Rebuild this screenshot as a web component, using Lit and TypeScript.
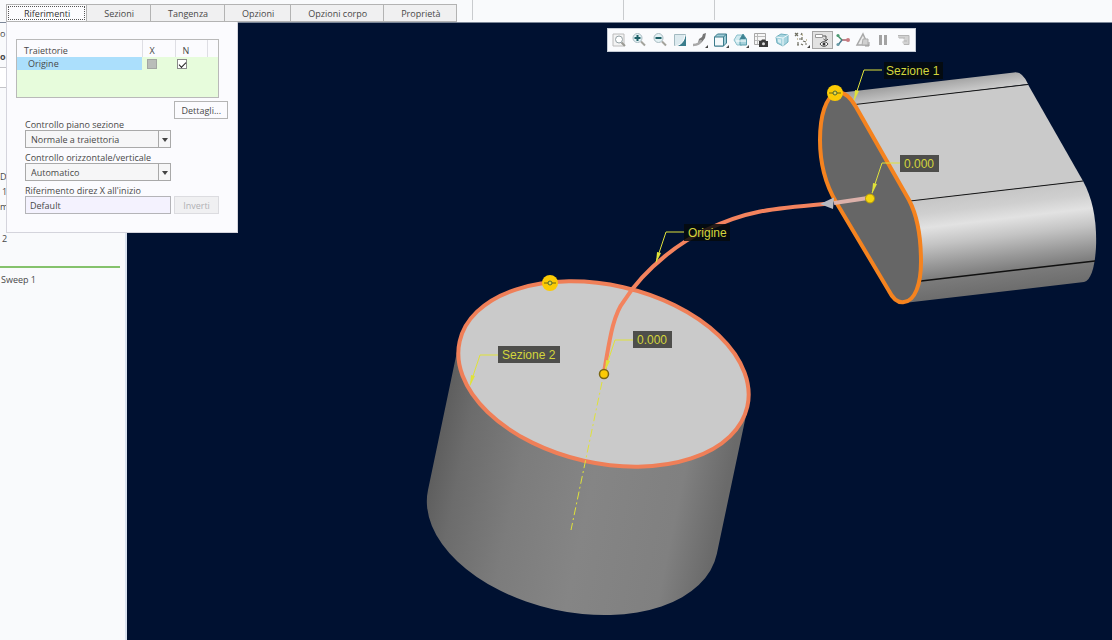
import { LitElement, html, css, svg } from "lit";
import { customElement, state } from "lit/decorators.js";
import { classMap } from "lit/directives/class-map.js";

const TABS = ["Riferimenti", "Sezioni", "Tangenza", "Opzioni", "Opzioni corpo", "Proprietà"];

const lens = svg`<circle cx="6.500" cy="6" r="4.500" fill="#e3f1f4" stroke="#a9bcc2"/><path d="M10 9.500l4 4" stroke="#a3a39c" stroke-width="2"/>`;
const more = svg`<path d="M16 13v3h-3z" fill="#444"/>`;

const TOOLS = [
  { label: "Adatta", icon: svg`<path d="M2 2h11v12H2z" fill="#f3f3f3" stroke="#bcbcbc"/><circle cx="8" cy="7.500" r="3.500" fill="#fff" stroke="#93a0a4"/><path d="M10.500 10.500l3.500 3.500" stroke="#9a9a94" stroke-width="2"/>` },
  { label: "Zoom avanti", icon: svg`${lens}<path d="M3.500 6h6M6.500 3v6" stroke="#1c5f66" stroke-width="2"/>` },
  { label: "Zoom indietro", icon: svg`${lens}<path d="M3.500 6h6" stroke="#1c5f66" stroke-width="2"/>` },
  { label: "Ridisegna", icon: svg`<path d="M2.500 2.500h11v11h-11z" fill="#dceaef" stroke="#a3bac1"/><path d="M14 3v11H5c5-2 7-5 9-11z" fill="#3b7d8c"/><path d="M3 14c6-1 9-4 10-11" fill="none" stroke="#fff"/>` },
  { label: "Rendering", icon: svg`<path d="M6 11l1-4 3-2 1-3 3-1-1 5-3 4-3 2z" fill="#767676"/><path d="M1 13c4 0 7-1 8-5" fill="none" stroke="#a9a9a9" stroke-width="2.500"/>${more}` },
  { label: "Stile di visualizzazione", icon: svg`<path d="M1.500 5l3-3h9v9l-3 3h-9z" fill="#9ccbd6" stroke="#3c7b8b"/><path d="M1.500 5h9v9h-9z" fill="#f4f9fb" stroke="#3c7b8b"/><path d="M10.500 5l3-3" stroke="#3c7b8b"/>${more}` },
  { label: "Orientamenti salvati", icon: svg`<path d="M1 8l3-5h5v10H4z" fill="#cfe9ef" stroke="#8bc0cc"/><path d="M10 2l3.500 5v6H7V7z" fill="#a5d1db" stroke="#5b9eac"/><path d="M10 2l3 5H7z" fill="#3e8292"/><path d="M3 9h10" stroke="#fff"/>${more}` },
  { label: "Gestione viste", icon: svg`<path d="M1.500 1.500h11v11h-11z" fill="#f6f6f6" stroke="#a7a7a7"/><path d="M2 4.500h10M4.500 2v10M2 8.500h10" stroke="#bbb"/><path d="M6 9h2l1-1.500h3L13 9h2v6H6z" fill="#3b3b3b"/><circle cx="10.500" cy="11.800" r="1.500" fill="#ddd"/>` },
  { label: "Prospettiva", icon: svg`<path d="M2 5l5-3 7 1v7l-5 4-6-3z" fill="#a6d4df" stroke="#6fafbe"/><path d="M2 5l7 1v8M9 6l5-3" fill="none" stroke="#eef8fa"/><path d="M4 7l3 .5v4L4 10z" fill="#d6edf2"/>` },
  { label: "Filtri riferimenti", icon: svg`<path d="M1 1l3 3M4 1L1 4M7 3l1-2M5 7h3M8 5v3M4 10v3M3 13h2M7 12l2 1M9 9l3 1M11 12h2" stroke="#6f6f62" stroke-width="1.200"/><path d="M8 3h1M12 8h1M3 7h1" stroke="#9b8d4d"/>${more}` },
  { label: "Visualizzazione annotazioni", on: true, icon: svg`<path d="M1.500 2.500h7v3h-7z" fill="#fff" stroke="#999"/><path d="M9 4h3v5M9.500 7l2.500 2 2-2" fill="none" stroke="#555"/><path d="M6 12c2-3 6-3 8 0-2 3-6 3-8 0z" fill="#fff" stroke="#444"/><circle cx="10" cy="12" r="1.500" fill="#333"/>` },
  { label: "Centro di rotazione", icon: svg`<path d="M7 8h6" stroke="#a8606a" stroke-width="1.500"/><path d="M7 8L3 4" stroke="#3f8c66" stroke-width="1.500"/><path d="M7 8l-4 5" stroke="#4a7c8d" stroke-width="1.500"/><circle cx="3" cy="3.500" r="1.600" fill="#4c9a72"/><circle cx="3" cy="12.500" r="1.600" fill="#6b9ca8"/><circle cx="13" cy="8" r="2" fill="#c87a80"/>` },
  { label: "Simulazione", icon: svg`<path d="M8 2l5 11H2z" fill="#ececec" stroke="#a8a8a8" stroke-width="1.500"/><path d="M8 7h5v6H7z" fill="#d0d0d0" stroke="#adadad"/><path d="M14 10v4h-4" fill="none" stroke="#9a9a9a"/>` },
  { label: "Pausa", icon: svg`<path d="M4 3h3v10H4zM9 3h3v10H9z" fill="#a3a3a3"/>` },
  { label: "Riprendi", icon: svg`<path d="M2 3h11v10H8l-2-3 2-2-1-2H2z" fill="#d2d2d2"/><path d="M2 3.500h11v9H8M3 6h6M8 9h3" fill="none" stroke="#b5b5b5"/>` },
];

@customElement("model-scene")
class ModelScene extends LitElement {
  static styles = css`
    :host { display: block; height: 100%; }
    .canvas { display: block; width: 100%; height: 100%; }
    .note { font: 12px "Liberation Sans", Arial, sans-serif; fill: #d3d53c; }
    .leader { fill: none; stroke: #dfe23a; stroke-width: 1; }
    .tip { fill: #dfe23a; }
    .plate { fill: #4e4e4b; }
    .dark { fill: #050a0c; fill-opacity: 0.85; }
    .edge { stroke: #161616; stroke-width: 1; }
    .section { fill: none; stroke: #ef7f58; stroke-width: 4; }
    .track { fill: none; stroke: #f3835e; stroke-width: 4; stroke-linecap: round; }
  `;

  private note(x: number, y: number, w: number, text: string, dark = false, pad = 4) {
    return svg`
      <rect class=${dark ? "dark" : "plate"} x=${x} y=${y} width=${w} height="17"/>
      <text class="note" x=${x + pad} y=${y + 13}>${text}</text>`;
  }

  private leader(x: number, y: number) {
    return svg`
      <path class="leader" d="M${x} ${y}h-18l-10 30"/>
      <path class="tip" d="M${x - 28} ${y + 31}l1 -11l4 1z"/>`;
  }

  private handle(x: number, y: number) {
    return svg`
      <circle cx=${x} cy=${y} r="8" fill="#fbcb05"/>
      <path d="M${x - 6} ${y}h12" stroke="#6b6410"/>
      <circle cx=${x} cy=${y} r="2" fill="#e8d84a" stroke="#4d6b33"/>`;
  }

  render() {
    return html`
      <svg class="canvas" viewBox="127 23 985 617" preserveAspectRatio="xMinYMin slice" role="img" aria-label="Modello 3D">
        <defs>
          <linearGradient id="drum" gradientUnits="userSpaceOnUse" x1="440" y1="420" x2="728" y2="480">
            <stop offset="0" stop-color="#5d5d5d"/><stop offset="0.1" stop-color="#6c6c6c"/>
            <stop offset="0.3" stop-color="#7c7c7c"/><stop offset="0.55" stop-color="#858585"/>
            <stop offset="0.85" stop-color="#808080"/><stop offset="1" stop-color="#6a6a6a"/>
          </linearGradient>
          <linearGradient id="round" gradientUnits="userSpaceOnUse" x1="910" y1="201" x2="922" y2="302">
            <stop offset="0" stop-color="#c6c6c6"/><stop offset="0.14" stop-color="#cfcfcf"/>
            <stop offset="0.28" stop-color="#e2e2e2"/><stop offset="0.45" stop-color="#c4c4c4"/>
            <stop offset="0.65" stop-color="#999"/><stop offset="0.8" stop-color="#7b7b7b"/>
            <stop offset="1" stop-color="#6c6c6c"/>
          </linearGradient>
          <linearGradient id="crown" gradientUnits="userSpaceOnUse" x1="930" y1="82" x2="932" y2="96">
            <stop offset="0" stop-color="#a2a2a2"/><stop offset="1" stop-color="#cacaca"/>
          </linearGradient>
        </defs>

        <path fill="url(#crown)" d="M838 93L1014 72.500Q1022 71 1028 84L855 105z"/>
        <path fill="#cacaca" d="M850 105L1028 84.500L1083 181L910 201z"/>
        <path fill="url(#round)" d="M908 201L1083 181C1093 199 1097 222 1096 247C1095 264 1092 280 1084 282L904 303z"/>
        <path class="edge" d="M855 104.500L1028 84.500M910 201L1083 181"/>
        <path stroke="#101010" stroke-width="1.500" d="M921 281L1095 261"/>
        <path fill="#666" stroke="#f5831f" stroke-width="4" stroke-linejoin="round"
          d="M836 93C826 97 820 115 820 140C820 165 826 185 836 202L889 291C893 299 898 303 904 302C915 301 921 284 921 262C921 237 918 217 909 200L856 107C849 95 843 91 836 93z"/>

        <path fill="url(#drum)" d="M459 342L428 490A147.800 89.300 12.800 0 0 716.800 554L748 406z"/>
        <ellipse class="section" style="fill:#cacaca" cx="603.500" cy="374" rx="147.500" ry="89" transform="rotate(12.800 603.500 374)"/>
        <path class="leader" stroke-dasharray="8 3 2 3" d="M602 382L571 530"/>

        <path class="track" d="M604 372C609 345 612 316 624 301C646 266 684 240 706 230C746 211 768 209 824 204"/>
        <path d="M868 198L834 203" stroke="#dcb1aa" stroke-width="4"/>
        <path d="M820 204L834 197.500L833 209z" fill="#b6b9c2"/>

        ${this.leader(882, 70)} ${this.note(884, 62, 59, "Sezione 1", true, 2)}
        ${this.leader(900, 163)} ${this.note(900, 155, 39, "0.000")}
        ${this.leader(684, 232)} ${this.note(684, 224, 46, "Origine", true)}
        ${this.leader(498, 355)} ${this.note(498, 346, 62, "Sezione 2")}
        ${this.leader(633, 340)} ${this.note(633, 331, 39, "0.000")}

        <circle cx="870" cy="198.500" r="4.500" fill="#f5d60d" stroke="#b3960b"/>
        <circle cx="604" cy="374" r="4.500" fill="#fbcb05" stroke="#7a6612" stroke-width="1.500"/>
        ${this.handle(835, 93)} ${this.handle(550, 283)}
      </svg>`;
  }
}

@customElement("app-root")
class AppRoot extends LitElement {
  @state() private tab = 0;

  static styles = css`
    :host {
      display: flex; flex-direction: column; height: 100vh; position: relative; overflow: hidden;
      background: #f9fafc; color: #484848; font: 9px/11px "Open Sans", "Noto Sans", sans-serif;
    }
    * { box-sizing: border-box; }
    button, input, select { font: inherit; color: inherit; margin: 0; }
    .ribbon { display: flex; height: 23px; border-bottom: 1px solid #7c8798; flex: none; }
    .tabs { display: flex; align-items: flex-end; padding-left: 6px; }
    .tab { height: 18px; padding: 0 16px 0 17px; border: 1px solid #b3b3b3; border-left-width: 0; background: #f0f0f1; }
    .tab.active { border-left-width: 1px; background: #fcfcfe; outline: 1px dotted #555; outline-offset: -3px; color: #333; }
    .group { width: 16px; height: 20px; border-right: 1px solid #c9cbce; }
    .group.wide { width: 151px; }
    .group.mid { width: 91px; }
    .body { display: flex; flex: 1; min-height: 0; }
    .tree { width: 127px; border-right: 2px solid #dbe3f0; overflow: hidden; flex: none; }
    .crumbs { display: flex; flex-direction: column; gap: 12px; padding-top: 5px; }
    .strong { font-weight: 700; }
    .search { height: 21px; margin: 5px 0 81px; border: 1px solid #c4c4c8; border-width: 1px 0; background: #fff; }
    .items { list-style: none; margin: 0; padding: 0; line-height: 15px; }
    .nested { padding-left: 2px; }
    .last { padding: 17px 0 0 2px; }
    .insert { height: 2px; width: 120px; margin: 20px 0 6px; background: #85c26c; }
    .feature { padding-left: 1px; }
    .view { flex: 1; min-width: 0; background: #001131; position: relative; }
    .tools {
      position: absolute; top: 5px; left: 480px; display: grid; grid-template-columns: repeat(15, 1fr);
      width: 309px; height: 24px; padding: 2px 1px; background: #fafbfd; border: 1px solid #c4cad4;
    }
    .tool { display: grid; place-items: center; padding: 0; border: 1px solid transparent; background: none; }
    .tool.on { background: #e2e2e2; border-color: #a5a5a5; }
    .glyph { width: 16px; height: 16px; fill: none; }
    .panel {
      position: absolute; top: 22px; left: 6px; width: 232px; padding: 17px 9px 18px;
      background: #fbfbfe; border: 1px solid #d4d4dc; border-top: 0;
    }
    .grid { width: 203px; height: 59px; border: 1px solid #b9b9b9; background: #e7fcdc; }
    .rows { width: 100%; border-collapse: collapse; table-layout: fixed; }
    .rows th { height: 17px; padding: 3px 0 0 7px; font-weight: 400; text-align: left; background: #fbfbfe; border-right: 1px solid #dedee4; }
    .rows td { height: 13px; padding: 0 0 0 5px; }
    .rows td.name { padding-left: 11px; background: #abdffc; }
    .rows td.normal { padding-left: 2px; }
    .rows th.end { border-right: 0; }
    .c1 { width: 125px; } .c2 { width: 33px; } .c3 { width: 32px; }
    .check { appearance: none; display: grid; place-items: center; width: 10px; height: 10px; border: 1px solid #8a8a8a; background: #fff; }
    .check:disabled { background: #b9bdb9; border-color: #a2a6a2; }
    .check:checked::before { content: ""; width: 6px; height: 3px; border: solid #222; border-width: 0 0 1px 1px; transform: rotate(-45deg); }
    .action { display: flex; justify-content: flex-end; margin-top: 3px; }
    .btn { height: 18px; padding: 0 6px; border: 1px solid #b4b4b4; background: #fbfbfe; }
    .btn:disabled { width: 45px; padding: 0; color: #b0b0b4; border-color: #dcdce0; background: #f0f0f2; }
    .fields { display: grid; gap: 4px; padding-left: 9px; }
    .field { display: grid; }
    .row { display: flex; gap: 3px; }
    .pick { display: grid; width: 146px; }
    .pick > * { grid-area: 1 / 1; }
    .select { appearance: none; height: 18px; padding: 0 18px 0 5px; border: 1px solid #a9a9a9; border-radius: 0; background: #f6f6f7; }
    .arrow { justify-self: end; width: 13px; height: 18px; border-left: 1px solid #a9a9a9; pointer-events: none; }
    .text { width: 146px; height: 18px; padding: 0 4px; border: 1px solid #b4b4b8; background: #f4f2fe; }
  `;

  private pick(id: string, label: string, value: string) {
    return html`<div class="field">
      <label for=${id}>${label}</label>
      <div class="pick">
        <select class="select" id=${id}><option>${value}</option></select>
        <svg class="arrow" viewBox="0 0 12 18"><path d="M3 8h6l-3 4z" fill="#444"/></svg>
      </div>
    </div>`;
  }

  render() {
    return html`
      <header class="ribbon">
        <nav class="tabs">
          ${TABS.map((t, i) => html`<button class=${classMap({ tab: true, active: i === this.tab })} @click=${() => (this.tab = i)}>${t}</button>`)}
        </nav>
        <div class="group"></div><div class="group wide"></div><div class="group mid"></div>
      </header>
      <div class="body">
        <aside class="tree">
          <div class="crumbs"><span>o</span><span class="strong">o</span></div>
          <div class="search"></div>
          <ul class="items">
            <li>D</li><li class="nested">1</li><li>m</li><li class="last">2</li>
          </ul>
          <div class="insert"></div>
          <div class="feature">Sweep 1</div>
        </aside>
        <main class="view">
          <model-scene></model-scene>
          <div class="tools" role="toolbar">
            ${TOOLS.map((t) => html`<button class=${classMap({ tool: true, on: !!t.on })} aria-label=${t.label}><svg class="glyph" viewBox="0 0 16 16">${t.icon}</svg></button>`)}
          </div>
        </main>
      </div>
      <section class="panel">
        <div class="grid">
          <table class="rows">
            <thead><tr><th class="c1">Traiettorie</th><th class="c2">X</th><th class="c3">N</th><th class="end"></th></tr></thead>
            <tbody><tr>
              <td class="name">Origine</td>
              <td><input class="check" type="checkbox" disabled aria-label="X" /></td>
              <td class="normal"><input class="check" type="checkbox" checked aria-label="N" /></td>
              <td></td>
            </tr></tbody>
          </table>
        </div>
        <div class="action"><button class="btn">Dettagli...</button></div>
        <div class="fields">
          ${this.pick("plane", "Controllo piano sezione", "Normale a traiettoria")}
          ${this.pick("axis", "Controllo orizzontale/verticale", "Automatico")}
          <div class="field">
            <label for="dir">Riferimento direz X all'inizio</label>
            <div class="row"><input class="text" id="dir" value="Default" /><button class="btn" disabled>Inverti</button></div>
          </div>
        </div>
      </section>`;
  }
}
